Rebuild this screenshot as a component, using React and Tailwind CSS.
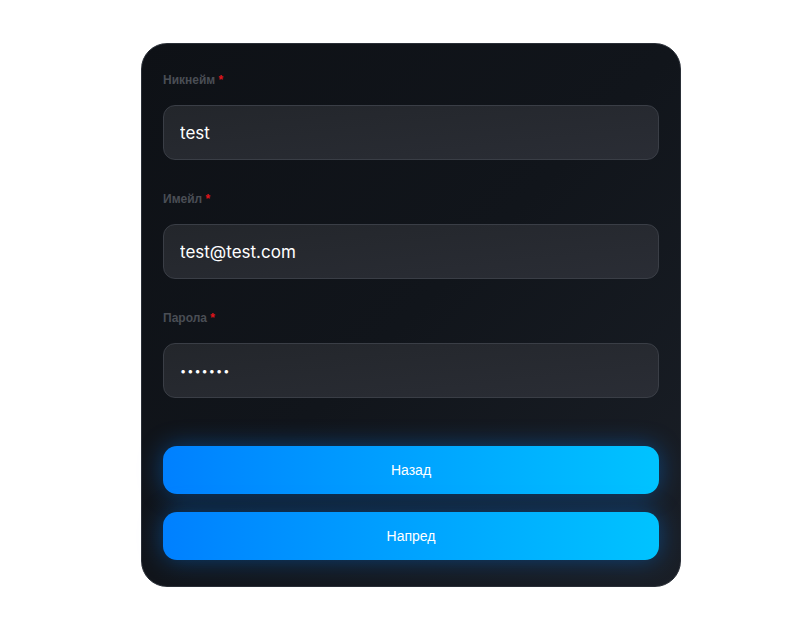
import React from 'react';

function Field({ label, value, type = 'text' }) {
    const isPass = type === 'password';
    return (
        <div className="flex flex-col">
            <label className="text-[12px] leading-4 font-bold text-[#4a4e55] font-['Liberation_Sans',sans-serif]">
                {label} <span className="text-[#e0141b]">*</span>
            </label>
            <input
                type={type}
                defaultValue={value}
                readOnly
                className={`mt-[17px] h-[55px] w-full rounded-[12px] border border-[#3a3e46] bg-gradient-to-br from-[#23262b] to-[#2a2d35] px-4 text-white font-['Inter',sans-serif] outline-none ${isPass ? 'text-[11px] tracking-[1px]' : 'text-[17px]'}`}
            />
        </div>
    );
}

export default function App() {
    return (
        <div className="min-h-screen bg-white pt-[43px] pl-[141px]">
            <div className="w-[540px] h-[544px] rounded-[26px] border border-[#2a2f37] bg-gradient-to-br from-[#0e1116] via-[#11151b] to-[#1a1f27] px-[21px] pt-[28px] flex flex-col">
                <div className="flex flex-col gap-[31px]">
                    <Field label="Никнейм" value="test" />
                    <Field label="Имейл" value="test@test.com" />
                    <Field label="Парола" value="1234567" type="password" />
                </div>
                <div className="mt-[48px] flex flex-col gap-[18px] font-['Liberation_Sans',sans-serif]">
                    <button className="h-[48px] w-full rounded-[14px] bg-gradient-to-r from-[#0080ff] to-[#00c3ff] text-[14px] text-white shadow-[0_0_24px_rgba(0,130,255,0.4)]">
                        Назад
                    </button>
                    <button className="h-[48px] w-full rounded-[14px] bg-gradient-to-r from-[#0080ff] to-[#00c3ff] text-[14px] text-white shadow-[0_0_24px_rgba(0,130,255,0.4)]">
                        Напред
                    </button>
                </div>
            </div>
        </div>
    );
}
